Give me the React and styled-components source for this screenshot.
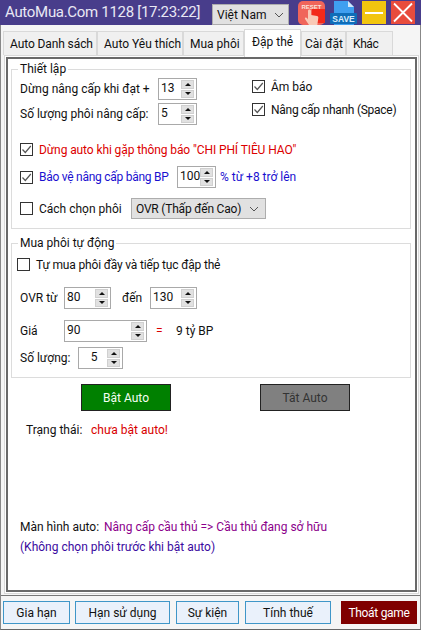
import React from "react";
import styled, { createGlobalStyle } from "styled-components";

const GlobalStyle = createGlobalStyle`
  html, body { margin: 0; padding: 0; background: #fff; }
  body { font-family: Roboto, "Noto Sans", sans-serif; font-size: 12px; color: #111; }
  * { box-sizing: border-box; }
`;

const Win = styled.div`
  width: 421px;
  height: 630px;
  display: flex;
  flex-direction: column;
  background: #f5f5f5;
  border-left: 1px solid #888;
  border-right: 1px solid #888;
  border-bottom: 1px solid #666;
`;

const Header = styled.header`
  height: 25px;
  margin: 0 -1px;
  background: #483d8b;
  display: flex;
  align-items: center;
  padding-left: 5px;
  flex: none;
`;

const Title = styled.div`
  width: 207px;
  color: #e8e8f4;
  font-size: 15px;
  letter-spacing: -0.3px;
  white-space: nowrap;
  margin-top: -2px;
  flex: none;
`;

const Combo = styled.div`
  width: 77px;
  height: 21px;
  align-self: flex-end;
  background: #e1e1e1;
  border: 1px solid #adadad;
  display: flex;
  align-items: center;
  justify-content: space-between;
  padding: 0 4px 0 4px;
  white-space: nowrap;
  flex: none;
`;

const HeadIcons = styled.div`
  display: flex;
  align-items: center;
  margin-left: 9px;
  gap: 5px;
  flex: none;
`;

const TabBar = styled.div`
  height: 26px;
  margin-top: 4px;
  padding-left: 2px;
  display: flex;
  align-items: flex-start;
  flex: none;
  position: relative;
  z-index: 1;
`;

const Tab = styled.div`
  width: ${(p) => p.$w}px;
  height: ${(p) => (p.$active ? 28 : 24)}px;
  margin-top: ${(p) => (p.$active ? 0 : 2)}px;
  background: ${(p) => (p.$active ? "#fff" : "#f0f0f0")};
  border: 1px solid #d9d9d9;
  border-bottom: none;
  display: flex;
  align-items: center;
  white-space: nowrap;
  padding-left: ${(p) => p.$pl ?? 6}px;
  padding-bottom: ${(p) => (p.$active ? 4 : 0)}px;
  letter-spacing: ${(p) => p.$ls || 0}px;
`;

const Panel = styled.main`
  margin: 0 1px 0 3px;
  height: 539px;
  border: 1px solid #d9d9d9;
  background: #fff;
  padding: 1px;
  flex: none;
`;

const PanelInner = styled.div`
  height: 100%;
  border: 2px solid #696969;
  padding: 3px 4px 0 3px;
`;

const Group = styled.fieldset`
  margin: 0 0 ${(p) => p.$mb || 0}px;
  padding: 0;
  height: ${(p) => p.$h}px;
  border: 1px solid #dcdcdc;
  min-width: 0;
`;

const Legend = styled.legend`
  margin-left: 6px;
  padding: 0 2px;
  line-height: 14px;
`;

const TwoCols = styled.div`
  display: flex;
  padding: 2px 0 0 8px;
`;

const LeftCol = styled.div`
  width: 232px;
  display: flex;
  flex-direction: column;
  gap: 3px;
`;

const RightCol = styled.div`
  display: flex;
  flex-direction: column;
  padding-top: 2px;
  gap: 10px;
`;

const Row = styled.div`
  display: flex;
  align-items: center;
  height: ${(p) => p.$h || 22}px;
  margin-top: ${(p) => p.$mt || 0}px;
  padding-left: ${(p) => p.$pl ?? 8}px;
  white-space: nowrap;
`;

const Label = styled.span`
  display: inline-block;
  width: ${(p) => (p.$w ? `${p.$w}px` : "auto")};
  flex: none;
  color: ${(p) => p.$color || "inherit"};
  margin-left: ${(p) => p.$ml || 0}px;
  letter-spacing: ${(p) => p.$ls || 0}px;
`;

const Box = styled.span`
  width: 13px;
  height: 13px;
  flex: none;
  border: 1px solid #333;
  background: #fff;
  display: inline-flex;
  align-items: center;
  justify-content: center;
  margin-right: 6px;
`;

const CheckRow = styled.div`
  display: flex;
  align-items: center;
  height: 13px;
  color: ${(p) => p.$color || "inherit"};
  white-space: nowrap;
`;

const SpinBox = styled.div`
  width: ${(p) => p.$w}px;
  height: 22px;
  flex: none;
  border: 1px solid #a9a9a9;
  background: #fff;
  display: flex;
  align-items: center;
  padding: 0 1px 0 2px;
`;

const SpinValue = styled.span`
  flex: 1;
  line-height: 16px;
  margin-top: -3px;
  text-align: ${(p) => (p.$center ? "center" : "left")};
`;

const SpinBtns = styled.span`
  width: 13px;
  height: 18px;
  display: flex;
  flex-direction: column;
  gap: 1px;
  flex: none;
  margin-right: 1px;
`;

const SpinBtn = styled.span`
  flex: 1;
  background: #e1e1e1;
  border: 1px solid #d0d0d0;
  display: flex;
  align-items: center;
  justify-content: center;
  &::after {
    content: "";
    border-left: 3px solid transparent;
    border-right: 3px solid transparent;
    ${(p) => (p.$down ? "border-top: 3px solid #111;" : "border-bottom: 3px solid #111;")}
  }
`;

const Select = styled(Combo)`
  width: 135px;
  align-self: auto;
  padding-right: 6px;
`;

const Actions = styled.div`
  display: flex;
  padding-left: 70px;
  margin-top: 6px;
  gap: 89px;
`;

const ActionBtn = styled.div`
  width: 90px;
  height: 27px;
  background: ${(p) => p.$bg};
  border: 1px solid #222;
  color: ${(p) => p.$color};
  display: flex;
  align-items: center;
  justify-content: center;
`;

const Status = styled.div`
  display: flex;
  padding-left: 15px;
  margin-top: 11px;
  line-height: 16px;
`;

const Notes = styled.div`
  margin-top: 79px;
  padding-left: 9px;
  line-height: 20px;
  white-space: nowrap;
`;

const Footer = styled.footer`
  flex: 1;
  margin-top: 1px;
  border-top: 1px solid #777;
  display: flex;
  align-items: center;
  padding: 0 2px;
`;

const FootBtn = styled.div`
  width: ${(p) => p.$w}px;
  height: 23px;
  margin-right: ${(p) => p.$mr || 0}px;
  background: ${(p) => p.$bg || "#eaf1fb"};
  color: ${(p) => p.$color || "#111"};
  border: 1px solid ${(p) => p.$line || "#3f96c8"};
  letter-spacing: ${(p) => p.$ls || 0}px;
  display: flex;
  align-items: center;
  justify-content: center;
  flex: none;
`;

const Chevron = () => (
  <svg width="10" height="6" viewBox="0 0 10 6">
    <path d="M1 1l4 4 4-4" fill="none" stroke="#555" strokeWidth="1" />
  </svg>
);

const Check = ({ on, color, children }) => (
  <CheckRow $color={color}>
    <Box>
      {on && (
        <svg width="11" height="11" viewBox="0 0 11 11">
          <path d="M1.5 5.5l2.8 3L9.800 2" fill="none" stroke="#555" strokeWidth="1.2" />
        </svg>
      )}
    </Box>
    {children}
  </CheckRow>
);

const Spinner = ({ w, value, center }) => (
  <SpinBox $w={w}>
    <SpinValue $center={center}>{value}</SpinValue>
    <SpinBtns>
      <SpinBtn />
      <SpinBtn $down />
    </SpinBtns>
  </SpinBox>
);

const ResetIcon = () => (
  <svg width="27" height="25" viewBox="0 0 27 25">
    <rect x="0" y="1" width="27" height="24" rx="5" fill="#f0655a" />
    <rect x="14" y="9" width="13" height="14" fill="#f3291a" />
    <text x="13.5" y="8.500" fontSize="6" fontWeight="700" textAnchor="middle" fill="#fbe4dc" fontFamily="Liberation Sans">RESET</text>
    <path d="M10 11c0-2 3-2 3 0v4l6 1c1 .3 1.500 1 1.300 2l-1 7H11l-4-6c-.6-1.300 1-2.200 2-1l1 1.500z" fill="#f9c9b6" />
  </svg>
);

const SaveIcon = () => (
  <svg width="27" height="25" viewBox="0 0 27 25">
    <path d="M4 1h14l6 6v18H4z" fill="#3f9ff0" />
    <path d="M18 1l6 6h-6z" fill="#cfe6fa" />
    <rect x="0" y="13" width="27" height="11" rx="1" fill="#0f6db8" />
    <text x="13.500" y="22" fontSize="8.500" fontWeight="700" textAnchor="middle" fill="#d9ecfb" fontFamily="Liberation Sans">SAVE</text>
  </svg>
);

const MinIcon = () => (
  <svg width="24" height="23" viewBox="0 0 24 23">
    <rect width="24" height="23" fill="#f2c50f" />
    <rect x="3" y="11" width="18" height="2" fill="#fff" />
  </svg>
);

const CloseIcon = () => (
  <svg width="24" height="23" viewBox="0 0 24 23">
    <rect width="24" height="23" fill="#e84c3d" />
    <path d="M3 2.500l18 18M21 2.500l-18 18" stroke="#fff" strokeWidth="1.800" />
  </svg>
);

export default function App() {
  return (
    <>
      <GlobalStyle />
      <Win>
        <Header>
          <Title>AutoMua.Com 1128 [17:23:22]</Title>
          <Combo>Việt Nam <Chevron /></Combo>
          <HeadIcons>
            <ResetIcon />
            <SaveIcon />
            <MinIcon />
            <CloseIcon />
          </HeadIcons>
        </Header>

        <TabBar>
          <Tab $w={94} $ls={-0.1}>Auto Danh sách</Tab>
          <Tab $w={86}>Auto Yêu thích</Tab>
          <Tab $w={61}>Mua phôi</Tab>
          <Tab $w={57} $pl={7} $active>Đập thẻ</Tab>
          <Tab $w={45} $pl={3}>Cài đặt</Tab>
          <Tab $w={47} $ls={-0.4}>Khác</Tab>
        </TabBar>

        <Panel>
          <PanelInner>
            <Group $h={167} $mb={7}>
              <Legend>Thiết lập</Legend>
              <TwoCols>
                <LeftCol>
                  <Row $pl={0}>
                    <Label $w={138}>Dừng nâng cấp khi đạt +</Label>
                    <Spinner w={39} value="13" />
                  </Row>
                  <Row $pl={0}>
                    <Label $w={138}>Số lượng phôi nâng cấp:</Label>
                    <Spinner w={39} value="5" />
                  </Row>
                </LeftCol>
                <RightCol>
                  <Check on>Âm báo</Check>
                  <Check on><Label $ls={-0.27}>Nâng cấp nhanh (Space)</Label></Check>
                </RightCol>
              </TwoCols>
              <Row $mt={18} $h={13}>
                <Check on color="#dc0000"><Label $ls={-0.1}>Dừng auto khi gặp thông báo "CHI PHÍ TIÊU HAO"</Label></Check>
              </Row>
              <Row $mt={10}>
                <Check on color="#1a10d0"><Label $w={138} $ls={-0.26}>Bảo vệ nâng cấp bằng BP</Label></Check>
                <Spinner w={39} value="100" />
                <Label $ml={4} $color="#1a10d0">% từ +8 trở lên</Label>
              </Row>
              <Row $mt={10} $h={21}>
                <Check><Label $w={92}>Cách chọn phôi</Label></Check>
                <Select><Label $ls={-0.2}>OVR (Thấp đến Cao)</Label> <Chevron /></Select>
              </Row>
            </Group>

            <Group $h={142}>
              <Legend>Mua phôi tự động</Legend>
              <Row $pl={5} $h={13} $mt={8}>
                <Check><Label $ls={-0.17}>Tự mua phôi đầy và tiếp tục đập thẻ</Label></Check>
              </Row>
              <Row $mt={16}>
                <Label $w={44}>OVR từ</Label>
                <Spinner w={47} value="80" />
                <Label $w={28} $ml={11}>đến</Label>
                <Spinner w={47} value="130" />
              </Row>
              <Row $mt={11}>
                <Label $w={44}>Giá</Label>
                <Spinner w={83} value="90" />
                <Label $w={20} $ml={9} $color="#dc0000">=</Label>
                <Label>9 tỷ BP</Label>
              </Row>
              <Row $mt={5}>
                <Label $w={58}>Số lượng:</Label>
                <Spinner w={45} value="5" center />
              </Row>
            </Group>

            <Actions>
              <ActionBtn $bg="#008000" $color="#f4fff4">Bật Auto</ActionBtn>
              <ActionBtn $bg="#808080" $color="#333">Tắt Auto</ActionBtn>
            </Actions>

            <Status>
              <Label $w={65}>Trạng thái:</Label>
              <Label $color="#d80000">chưa bật auto!</Label>
            </Status>

            <Notes>
              <div>
                <Label $w={84}>Màn hình auto:</Label>
                <Label $color="#8b008b">Nâng cấp cầu thủ =&gt; Cầu thủ đang sở hữu</Label>
              </div>
              <Label $color="#3a0aa0">(Không chọn phôi trước khi bật auto)</Label>
            </Notes>
          </PanelInner>
        </Panel>

        <Footer>
          <FootBtn $w={67} $mr={5}>Gia hạn</FootBtn>
          <FootBtn $w={95} $mr={6}>Hạn sử dụng</FootBtn>
          <FootBtn $w={63} $mr={6}>Sự kiện</FootBtn>
          <FootBtn $w={86} $mr={10}>Tính thuế</FootBtn>
          <FootBtn $w={76} $bg="#800000" $line="#800000" $color="#fff" $ls={-0.3}>Thoát game</FootBtn>
        </Footer>
      </Win>
    </>
  );
}
